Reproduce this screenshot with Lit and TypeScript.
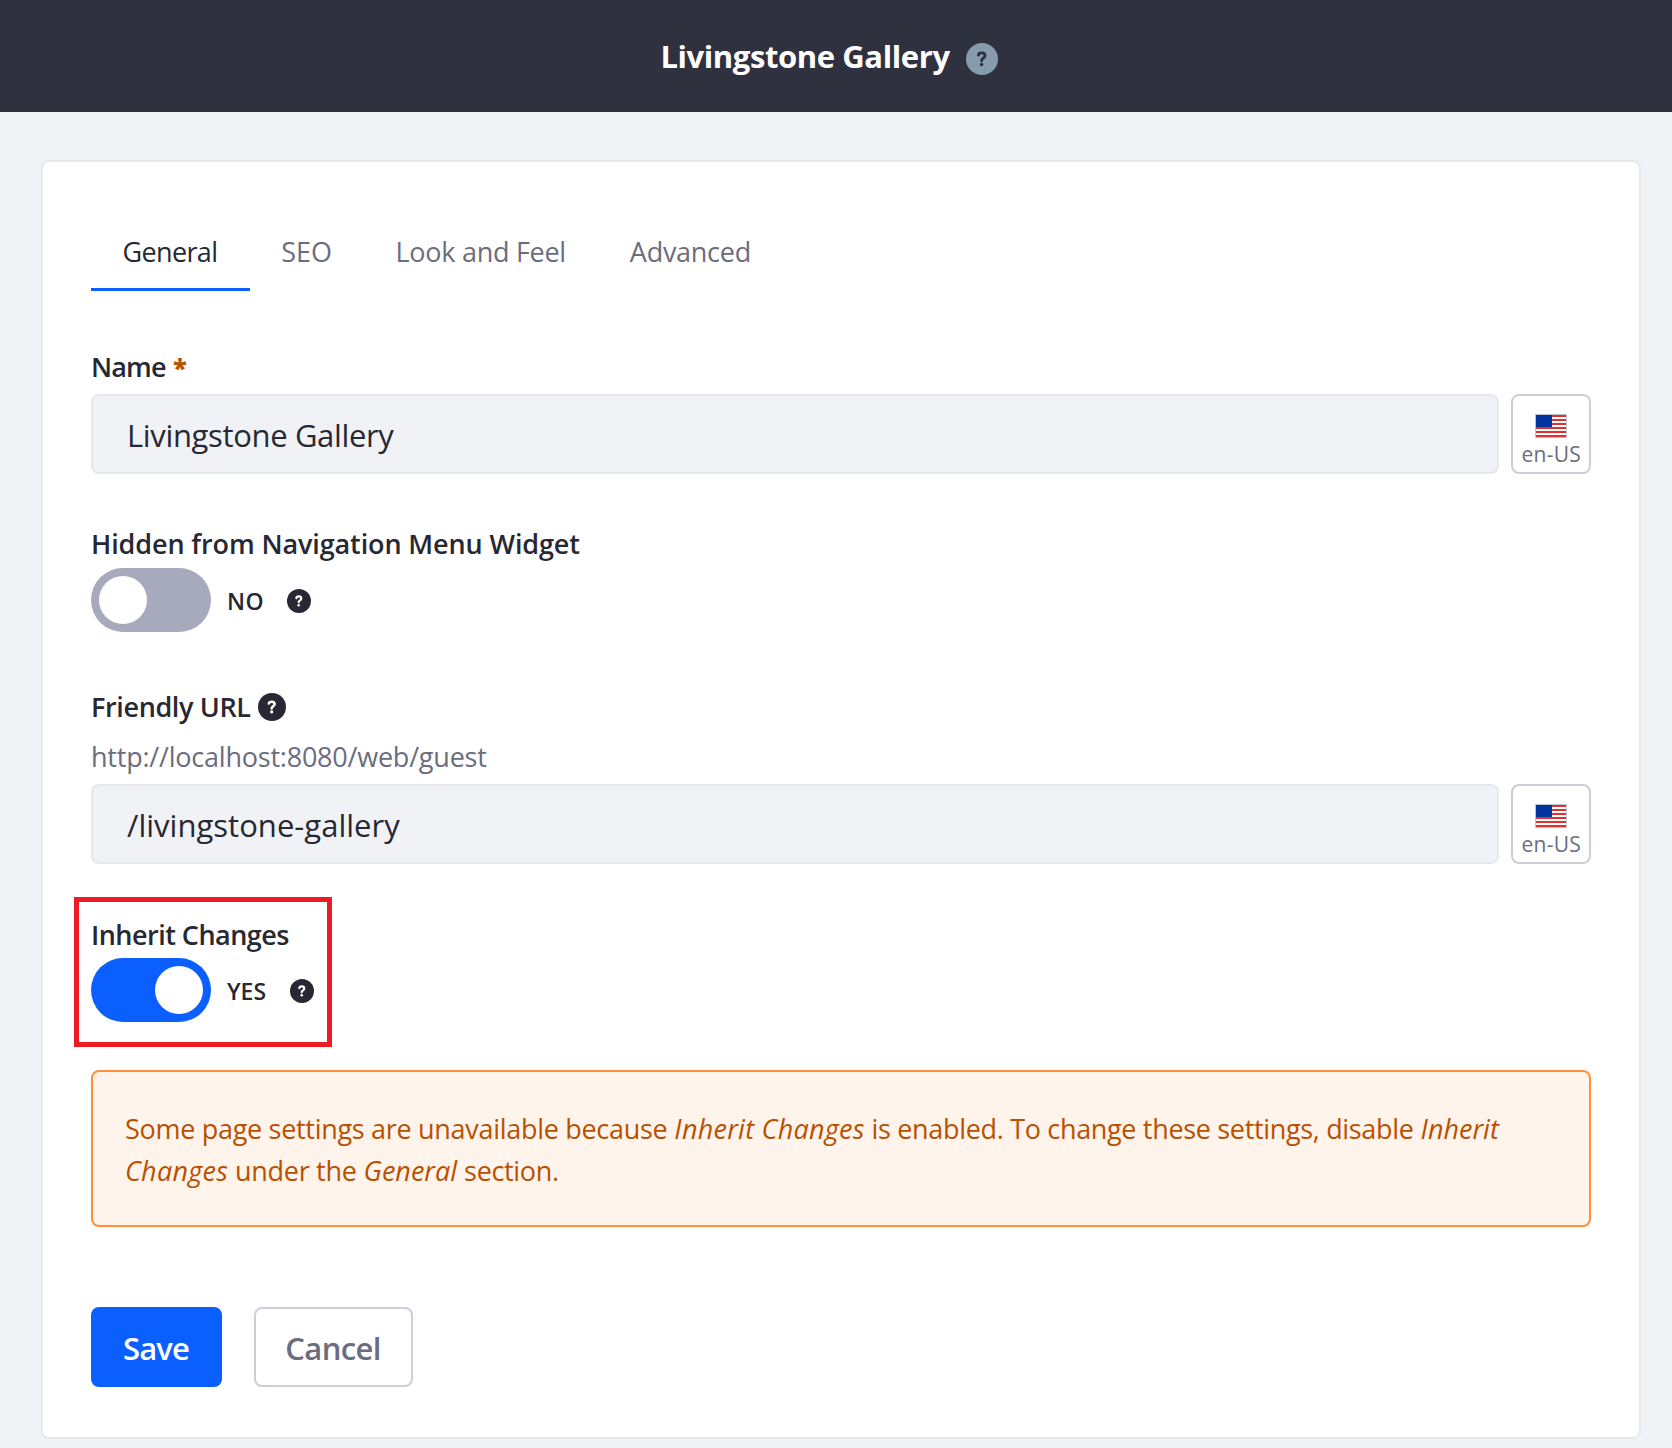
import { LitElement, html, css } from "lit";
import { customElement, property } from "lit/decorators.js";

/** Round "?" help icon. The mark takes the `--mark` colour. */
@customElement("help-icon")
export class HelpIcon extends LitElement {
  static styles = css`
    :host { display: block; flex: none; width: 24px; height: 24px; color: #272833; }
    .icon { display: block; width: 100%; height: 100%; }
    .mark { fill: none; stroke: var(--mark, #fff); stroke-width: 2.9; stroke-linecap: round; stroke-linejoin: round; }
    .dot { fill: var(--mark, #fff); }
  `;
  render() {
    return html`
      <svg class="icon" viewBox="0 0 32 32" aria-hidden="true">
        <circle cx="16" cy="16" r="16" fill="currentColor"></circle>
        <path class="mark" d="M12.4 12.1C12.6 10.4 13.9 9.9 15.7 9.9C17.8 9.9 19 11 19 12.6C19 15.2 15.6 15 15.6 17.8"></path>
        <circle class="dot" cx="15.6" cy="21.6" r="1.75"></circle>
      </svg>
    `;
  }
}

/** Language selector button with a flag above the locale code. */
@customElement("locale-button")
export class LocaleButton extends LitElement {
  static styles = css`
    :host { display: block; flex: none; }
    .button {
      display: flex; flex-direction: column; align-items: center; box-sizing: border-box;
      width: 80px; height: 80px; padding: 18px 0 0; border: 2px solid #cdced9; border-radius: 8px;
      background: #fff; color: #6b6c7e; font: 400 21px/28px "Open Sans", "Noto Sans", sans-serif;
      letter-spacing: 0.24px;
    }
    .flag { display: block; width: 32px; height: 24px; }
    .code { margin: 2px 0 0 0.5px; white-space: nowrap; }
  `;
  render() {
    return html`
      <button class="button" type="button">
        <svg class="flag" viewBox="0 0 32 24" shape-rendering="crispEdges" aria-hidden="true">
          <rect width="32" height="24" fill="#b9c6cd"></rect>
          <rect x="1" y="1" width="30" height="22" fill="#fff"></rect>
          <path d="M1 2h30M1 6h30M1 10h30M1 14h30M1 18h30M1 22h30" stroke="#e0312f" stroke-width="2"></path>
          <rect x="1" y="1" width="16" height="12" fill="#0035a0"></rect>
        </svg>
        <span class="code">en-US</span>
      </button>
    `;
  }
}

/** On/off switch with its state text and a help icon. */
@customElement("toggle-switch")
export class ToggleSwitch extends LitElement {
  @property({ type: Boolean, reflect: true }) on = false;
  static styles = css`
    :host { display: flex; align-items: center; height: 64px; }
    .track {
      display: flex; box-sizing: border-box; width: 120px; height: 64px; padding: 8px;
      border: 0; border-radius: 32px; background: #a7a9bc;
    }
    .knob { width: 48px; height: 48px; border-radius: 50%; background: #fff; }
    :host([on]) .track { justify-content: flex-end; background: #0b5fff; }
    .state { margin: 2px 22.7px 0 16px; font-size: 23px; line-height: 32px; letter-spacing: 0.6px; }
    :host([on]) .state { margin-right: 24px; letter-spacing: 0; }
    .help { margin-top: 2px; }
  `;
  render() {
    return html`
      <button class="track" type="button" role="switch" aria-checked=${this.on ? "true" : "false"}>
        <span class="knob"></span>
      </button>
      <span class="state">${this.on ? "YES" : "NO"}</span>
      <help-icon class="help"></help-icon>
    `;
  }
}

@customElement("app-root")
export class AppRoot extends LitElement {
  static styles = css`
    :host {
      display: block; box-sizing: border-box; min-height: 1448px; background: #f1f2f5; color: #272833;
      font-family: "Open Sans", "Noto Sans", sans-serif; font-size: 27px; line-height: 42px;
    }
    .header {
      display: flex; align-items: center; justify-content: center; gap: 16px; box-sizing: border-box;
      height: 112px; padding: 0 14px 0 0; background: #30313f; color: #fff;
    }
    .title { margin: 0; font-size: 31px; font-weight: 700; line-height: 44px; letter-spacing: -0.402px; }
    .header-help { width: 32px; height: 32px; margin-top: 6px; color: #869cad; --mark: #30313f; }
    .card {
      box-sizing: border-box; width: 1600px; margin: 48px 0 0 41px; padding: 48px 48px 50px;
      border: 2px solid #e7e7ed; border-radius: 8px; background: #fff;
    }
    .tabs { display: flex; margin-bottom: 54px; }
    .tab {
      box-sizing: border-box; height: 81px; padding: 21px 32px 0; color: #6b6c7e;
      white-space: nowrap; letter-spacing: -0.28px;
    }
    .tab.active {
      width: 159px; padding: 21px 31.5px 0; border-bottom: 3px solid #0b5fff; color: #272833;
      letter-spacing: -0.65px;
    }
    .tab.short { padding: 21px 31.7px 0 31.2px; letter-spacing: -0.05px; }
    .label { display: flex; align-items: center; padding-top: 1px; font-weight: 600; white-space: nowrap; }
    .name-label { margin-bottom: 6px; letter-spacing: -0.856px; }
    .required { margin-left: 7.5px; color: #b95000; font-size: 25px; font-weight: 800; }
    .hidden-label { margin-bottom: 3px; letter-spacing: -0.118px; }
    .url-label { letter-spacing: -0.37px; }
    .inherit-label { margin-bottom: 2px; letter-spacing: -0.519px; }
    .url-help { width: 28px; height: 28px; margin: 0 0 0 7px; }
    .prefix { margin: 8px 0 6px; color: #6b6c7e; letter-spacing: -0.22px; }
    .row { display: flex; gap: 12px; }
    .input {
      flex: 1; min-width: 0; box-sizing: border-box; height: 80px; margin: 0; padding: 2px 34px 0;
      border: 2px solid #e7e7ed; border-radius: 8px; background: #f1f2f5; color: #272833;
      font: 400 31px/44px "Open Sans", "Noto Sans", sans-serif; letter-spacing: -0.35px;
    }
    .input.url { letter-spacing: 0.02px; }
    .hidden-field { margin-top: 48px; font-weight: 600; }
    .url-field { margin-top: 53px; }
    .inherit-field { position: relative; margin-top: 49px; font-weight: 600; }
    .highlight {
      position: absolute; left: -17px; top: -16px; box-sizing: border-box;
      width: 258px; height: 150px; border: 5px solid #ed1c24; pointer-events: none;
    }
    .alert {
      box-sizing: border-box; height: 157px; margin-top: 48px; padding: 36px 32px 33px;
      border: 2px solid #ff8f39; border-radius: 8px; background: #fff4ec; color: #b95000;
    }
    .line { display: flex; gap: 7px; white-space: nowrap; letter-spacing: -0.3px; }
    .line em { letter-spacing: 0.24px; }
    .line .late { letter-spacing: -0.33px; }
    .line .name { letter-spacing: 0; }
    .actions { display: flex; gap: 32px; margin-top: 80px; }
    .btn {
      box-sizing: border-box; height: 80px; padding: 2px 1px 0 0; border-radius: 8px; text-align: center;
      font: 600 31px/44px "Open Sans", "Noto Sans", sans-serif;
    }
    .save { width: 131px; border: 2px solid #0b5fff; background: #0b5fff; color: #fff; letter-spacing: -0.86px; }
    .cancel { width: 159px; border: 2px solid #cdced9; background: #fff; color: #6b6c7e; letter-spacing: -0.656px; }
  `;

  render() {
    return html`
      <header class="header">
        <h1 class="title">Livingstone Gallery</h1>
        <help-icon class="header-help"></help-icon>
      </header>
      <main class="card">
        <nav class="tabs">
          <div class="tab active">General</div>
          <div class="tab short">SEO</div>
          <div class="tab">Look and Feel</div>
          <div class="tab">Advanced</div>
        </nav>

        <section>
          <div class="label name-label">Name<span class="required">*</span></div>
          <div class="row">
            <input class="input" type="text" readonly .value=${"Livingstone Gallery"} />
            <locale-button></locale-button>
          </div>
        </section>

        <section class="hidden-field">
          <div class="label hidden-label">Hidden from Navigation Menu Widget</div>
          <toggle-switch></toggle-switch>
        </section>

        <section class="url-field">
          <div class="label url-label">Friendly URL<help-icon class="url-help"></help-icon></div>
          <div class="prefix">http://localhost:8080/web/guest</div>
          <div class="row">
            <input class="input url" type="text" readonly .value=${"/livingstone-gallery"} />
            <locale-button></locale-button>
          </div>
        </section>

        <section class="inherit-field">
          <div class="label inherit-label">Inherit Changes</div>
          <toggle-switch on></toggle-switch>
          <div class="highlight"></div>
        </section>

        <div class="alert" role="alert">
          <div class="line">
            <span>Some page settings are unavailable because</span>
            <em>Inherit Changes</em>
            <span class="late">is enabled. To change these settings, disable</span>
            <em class="name">Inherit</em>
          </div>
          <div class="line">
            <em>Changes</em>
            <span>under the</span>
            <em class="name">General</em>
            <span class="late">section.</span>
          </div>
        </div>

        <div class="actions">
          <button class="btn save" type="button">Save</button>
          <button class="btn cancel" type="button">Cancel</button>
        </div>
      </main>
    `;
  }
}
